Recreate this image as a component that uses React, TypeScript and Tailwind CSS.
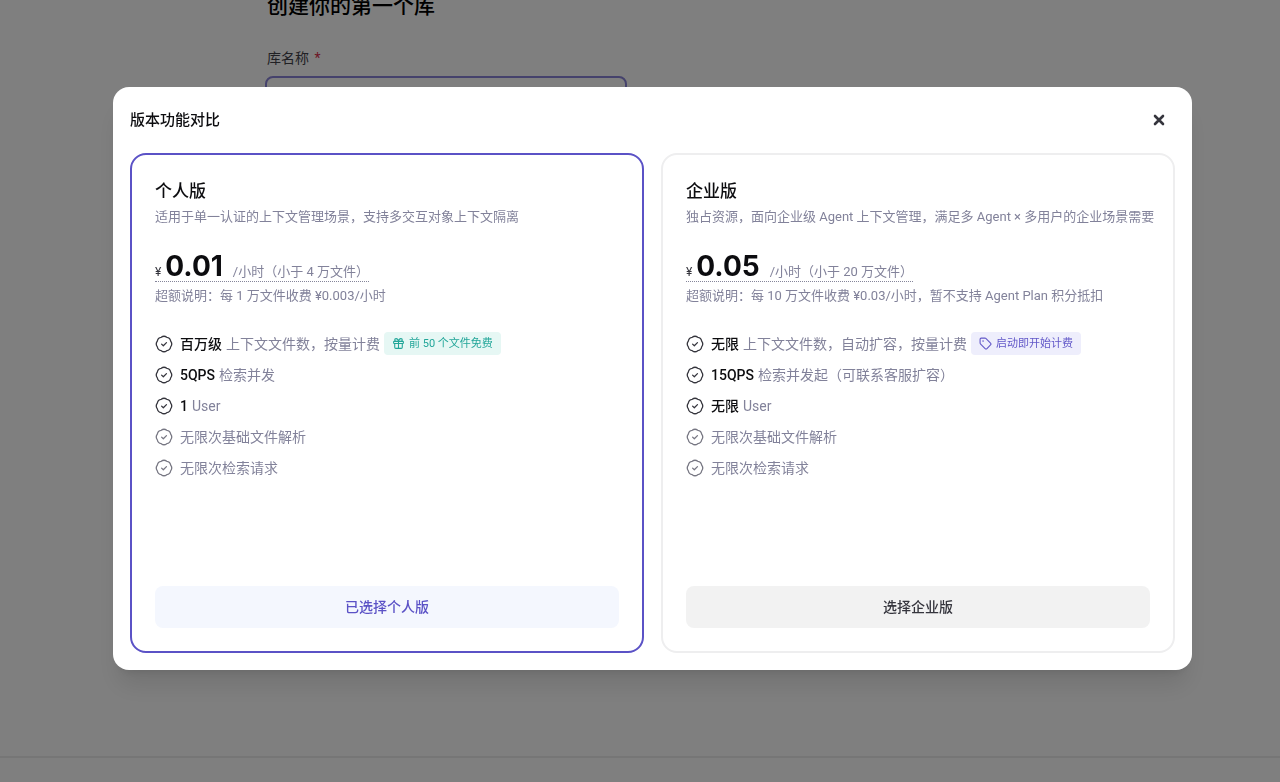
import type { ReactNode } from 'react';
import { Gift, Tag } from 'lucide-react';

type Feature = {
  label?: string;
  text: string;
  badge?: ReactNode;
};

type Plan = {
  id: string;
  name: string;
  description: string;
  price: string;
  unit: string;
  note: string;
  action: string;
  selected: boolean;
  features: Feature[];
};

const plans: Plan[] = [
  {
    id: 'personal',
    name: '个人版',
    description: '适用于单一认证的上下文管理场景，支持多交互对象上下文隔离',
    price: '0.01',
    unit: '/小时（小于 4 万文件）',
    note: '超额说明：每 1 万文件收费 ¥0.003/小时',
    action: '已选择个人版',
    selected: true,
    features: [
      {
        label: '百万级',
        text: '上下文文件数，按量计费',
        badge: (
          <span className="flex h-[23px] items-center gap-1 rounded bg-[#e6f7f4] px-2 text-[11px] text-[#22a699]">
            <Gift size={13} strokeWidth={2} />
            前 50 个文件免费
          </span>
        ),
      },
      { label: '5QPS', text: '检索并发' },
      { label: '1', text: 'User' },
      { text: '无限次基础文件解析' },
      { text: '无限次检索请求' },
    ],
  },
  {
    id: 'enterprise',
    name: '企业版',
    description: '独占资源，面向企业级 Agent 上下文管理，满足多 Agent × 多用户的企业场景需要',
    price: '0.05',
    unit: '/小时（小于 20 万文件）',
    note: '超额说明：每 10 万文件收费 ¥0.03/小时，暂不支持 Agent Plan 积分抵扣',
    action: '选择企业版',
    selected: false,
    features: [
      {
        label: '无限',
        text: '上下文文件数，自动扩容，按量计费',
        badge: (
          <span className="flex h-[23px] items-center gap-1 rounded bg-[#eeeefc] px-2 text-[11px] text-[#6258c8]">
            <Tag size={13} strokeWidth={2} />
            启动即开始计费
          </span>
        ),
      },
      { label: '15QPS', text: '检索并发起（可联系客服扩容）' },
      { label: '无限', text: 'User' },
      { text: '无限次基础文件解析' },
      { text: '无限次检索请求' },
    ],
  },
];

function CheckIcon() {
  return (
    <svg
      viewBox="0 0 24 24"
      className="size-[18px] shrink-0"
      fill="none"
      stroke="currentColor"
      strokeWidth="1.7"
      strokeLinecap="round"
      strokeLinejoin="round"
      aria-hidden="true"
    >
      <path d="M20.9 8.3A6 6 0 0 1 20.9 15.7A6 6 0 0 1 15.7 20.9A6 6 0 0 1 8.3 20.9A6 6 0 0 1 3.1 15.7A6 6 0 0 1 3.1 8.3A6 6 0 0 1 8.3 3.1A6 6 0 0 1 15.7 3.1A6 6 0 0 1 20.9 8.3Z" />
      <path d="M8.8 12.2l2.3 2.2 4.2-4.2" />
    </svg>
  );
}

function PlanCard({ plan }: { plan: Plan }) {
  return (
    <section
      className={`flex min-h-[500px] flex-col rounded-2xl border-2 px-[23px] pt-6 pb-[23px] ${
        plan.selected ? 'border-[#5b52c6]' : 'border-[#eeeeef]'
      }`}
    >
      <h3 className="text-[17px] leading-6 font-medium text-[#0c0c0f]">{plan.name}</h3>
      <p className="mt-1 text-[13px] leading-5 whitespace-nowrap">{plan.description}</p>

      <div className="mt-6 flex h-[31px] items-baseline self-start border-b border-dotted border-[#85859a]">
        <span className="text-xs text-[#35353d]">¥</span>
        <span className="ml-1 font-[Inter] text-[28px] leading-[30px] font-bold text-[#0c0c0f]">{plan.price}</span>
        <span className="ml-2.5 text-[13px]">{plan.unit}</span>
      </div>
      <p className="mt-1 text-[13px] leading-5 whitespace-nowrap">{plan.note}</p>

      <ul className="mt-[26px] mb-6 flex flex-col gap-2">
        {plan.features.map((feature, index) => (
          <li key={index} className="flex h-[23px] items-center text-sm whitespace-nowrap">
            <span className={feature.label ? 'text-[#35353d]' : 'text-[#777783]'}>
              <CheckIcon />
            </span>
            <span className="ml-[7px] flex items-center gap-1">
              {feature.label && <strong className="font-medium text-[#0c0c0f]">{feature.label}</strong>}
              <span>{feature.text}</span>
              {feature.badge}
            </span>
          </li>
        ))}
      </ul>

      <button
        type="button"
        className={`mt-auto h-[42px] rounded-lg text-sm font-medium ${
          plan.selected ? 'bg-[#f4f7fe] text-[#5b52c6]' : 'bg-[#f2f2f2] text-[#35353d]'
        }`}
      >
        {plan.action}
      </button>
    </section>
  );
}

function CreateLibraryPage() {
  return (
    <div className="flex h-full flex-col bg-white">
      <main className="-mt-2 grow pl-[267px]">
        <h1 className="text-[21px] leading-7 font-medium text-black">创建你的第一个库</h1>
        <label htmlFor="library-name" className="mt-7 block text-sm text-[#42424a]">
          库名称 <span className="ml-0.5 text-[#d92d4a]">*</span>
        </label>
        <input
          id="library-name"
          type="text"
          className="mt-2 -ml-0.5 block h-10 w-[362px] rounded-lg border-2 border-[#8a84d8] bg-white px-3 outline-none"
        />
      </main>
      <footer className="h-[26px] overflow-hidden border-t-2 border-[#ededed] pt-[18px] pl-[367px]">
        <span className="block font-[Inter] text-xl leading-7 font-bold text-black">0.05</span>
      </footer>
    </div>
  );
}

export default function App() {
  return (
    <div className="h-screen overflow-hidden font-[Roboto,'Noto_Sans_CJK_SC',sans-serif] text-[#82829a]">
      <CreateLibraryPage />
      <div className="fixed inset-0 overflow-auto bg-black/50 pt-[87px] pr-[88px] pb-10 pl-[113px]">
        <div
          role="dialog"
          aria-modal="true"
          aria-labelledby="dialog-title"
          className="rounded-2xl bg-white px-[17px] pb-[17px] shadow-xl"
        >
          <header className="flex h-[66px] items-center justify-between">
            <h2 id="dialog-title" className="text-[15px] font-medium text-[#0c0c0f]">
              版本功能对比
            </h2>
            <button type="button" aria-label="关闭" className="flex size-8 items-center justify-center text-[#35353d]">
              <svg viewBox="0 0 12 12" className="size-3" fill="none" stroke="currentColor" strokeWidth="2.6" strokeLinecap="round">
                <path d="M2 2l8 8M10 2l-8 8" />
              </svg>
            </button>
          </header>
          <div className="grid grid-cols-2 gap-[17px]">
            {plans.map((plan) => (
              <PlanCard key={plan.id} plan={plan} />
            ))}
          </div>
        </div>
      </div>
    </div>
  );
}
